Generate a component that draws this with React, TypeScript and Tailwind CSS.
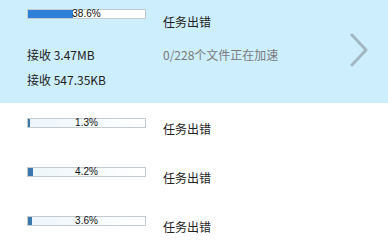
import React from "react";

const cjk = { fontFamily: '"Noto Sans CJK SC", "Noto Sans", sans-serif' };

const Bar = ({ pct, active }: { pct: number; active?: boolean }) => (
  <div
    className={`relative h-[10px] w-[119px] border border-[#c3cbd0] ${
      active ? "bg-white" : "bg-gradient-to-r from-[#edf6fa] to-white"
    }`}
  >
    <div
      className={`absolute left-0 top-0 h-full ${active ? "bg-[#2f80d8]" : "bg-[#3b76ac]"}`}
      style={{ width: `${Math.max(2, Math.round((pct / 100) * 117))}px` }}
    />
    <div
      className="relative text-center text-[10px] leading-[8px] text-[#111]"
      style={{ fontFamily: '"Liberation Sans", Arial, sans-serif' }}
    >
      {pct}%
    </div>
  </div>
);

const Row = ({ pct }: { pct: number }) => (
  <div className="flex h-[49px] pl-[27px] bg-white">
    <div className="w-[119px] pt-[15px]">
      <Bar pct={pct} />
    </div>
    <div className="ml-[17px] pt-[18px] text-[12px] leading-[16px] text-[#222]">任务出错</div>
  </div>
);

export default function App() {
  return (
    <div className="h-[245px] w-[388px] overflow-hidden bg-white" style={cjk}>
      <div className="flex h-[103px] bg-[#cdeefc] pl-[27px]">
        <div className="w-[119px] pt-[9px]">
          <Bar pct={38.6} active />
          <div className="mt-[28px] text-[12px] leading-[16px] text-[#222]">接收 3.47MB</div>
          <div className="mt-[9px] text-[12px] leading-[16px] text-[#222]">接收 547.35KB</div>
        </div>
        <div className="ml-[17px] flex-1 pt-[14px]">
          <div className="text-[12px] leading-[16px] text-[#222]">任务出错</div>
          <div className="mt-[17px] text-[12px] leading-[16px] text-[#7a7a7a]">0/228个文件正在加速</div>
        </div>
        <div className="flex w-[39px] items-start pt-[33px]">
          <svg width="20" height="34" viewBox="0 0 20 34">
            <polyline
              points="3,2 17,17 3,32"
              fill="none"
              stroke="#a2b7c3"
              strokeWidth="3"
              strokeLinecap="round"
              strokeLinejoin="round"
            />
          </svg>
        </div>
      </div>
      <Row pct={1.3} />
      <Row pct={4.2} />
      <Row pct={3.6} />
    </div>
  );
}
